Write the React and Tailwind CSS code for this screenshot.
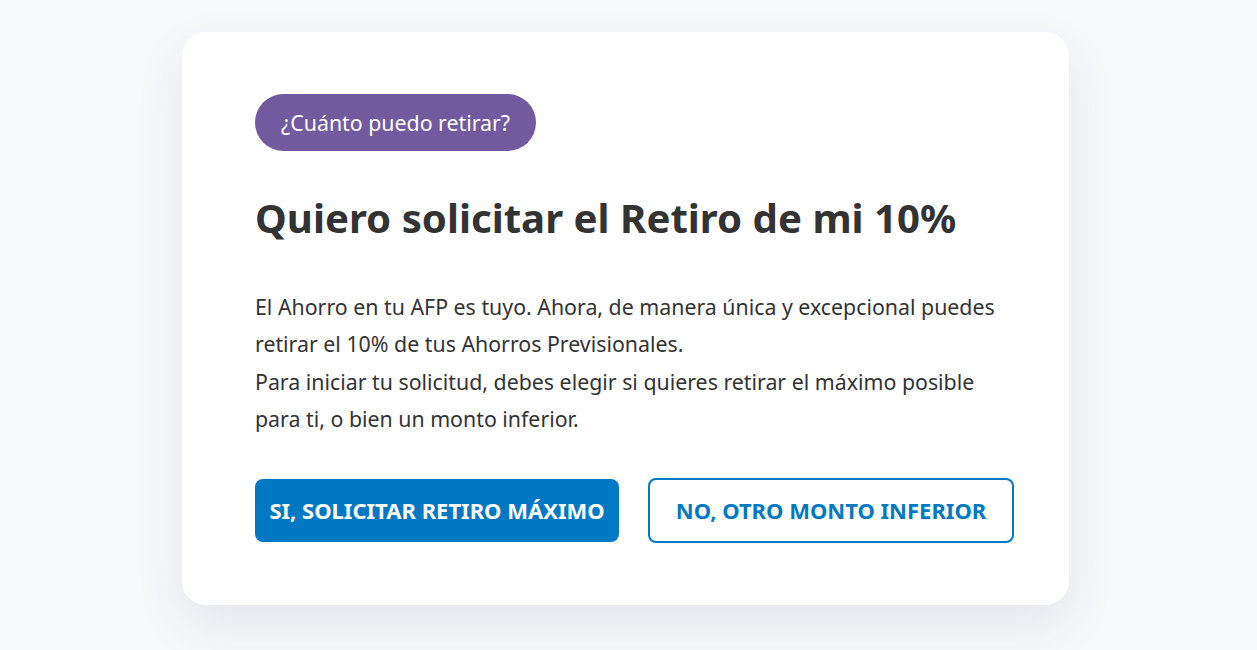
export default function App() {
  return (
    <div
      className="min-h-screen w-full bg-[#f7f8fa] pt-[32px]"
      style={{ fontFamily: '"Noto Sans", "Open Sans", sans-serif' }}
    >
      <div className="ml-[182px] w-[887px] rounded-[24px] bg-white pl-[73px] pr-[40px] pt-[62px] pb-[62px] shadow-[0_20px_50px_rgba(40,60,100,0.09)]">
        <span className="inline-flex h-[57px] items-center rounded-full bg-[#725a9e] px-[26px] text-[21.33px] text-white">
          ¿Cuánto puedo retirar?
        </span>

        <h1 className="mt-[42px] text-[40.2px] font-bold leading-[50px] text-[#333333]">
          Quiero solicitar el Retiro de mi 10%
        </h1>

        <p className="mt-[45px] text-[21.33px] leading-[37.33px] text-[#333333]">
          El Ahorro en tu AFP es tuyo. Ahora, de manera única y excepcional puedes
          <br />
          retirar el 10% de tus Ahorros Previsionales.
          <br />
          Para iniciar tu solicitud, debes elegir si quieres retirar el máximo posible
          <br />
          para ti, o bien un monto inferior.
        </p>

        <div className="mt-[41px] flex items-center gap-[29px]">
          <button className="h-[63px] w-[364px] rounded-[8px] bg-[#0078c3] text-[22px] font-bold uppercase text-white">
            Si, solicitar retiro máximo
          </button>
          <button className="h-[65px] w-[366px] rounded-[8px] border-2 border-[#0078c3] bg-white text-[22px] font-bold uppercase text-[#0078c3]">
            No, otro monto inferior
          </button>
        </div>
      </div>
    </div>
  );
}
